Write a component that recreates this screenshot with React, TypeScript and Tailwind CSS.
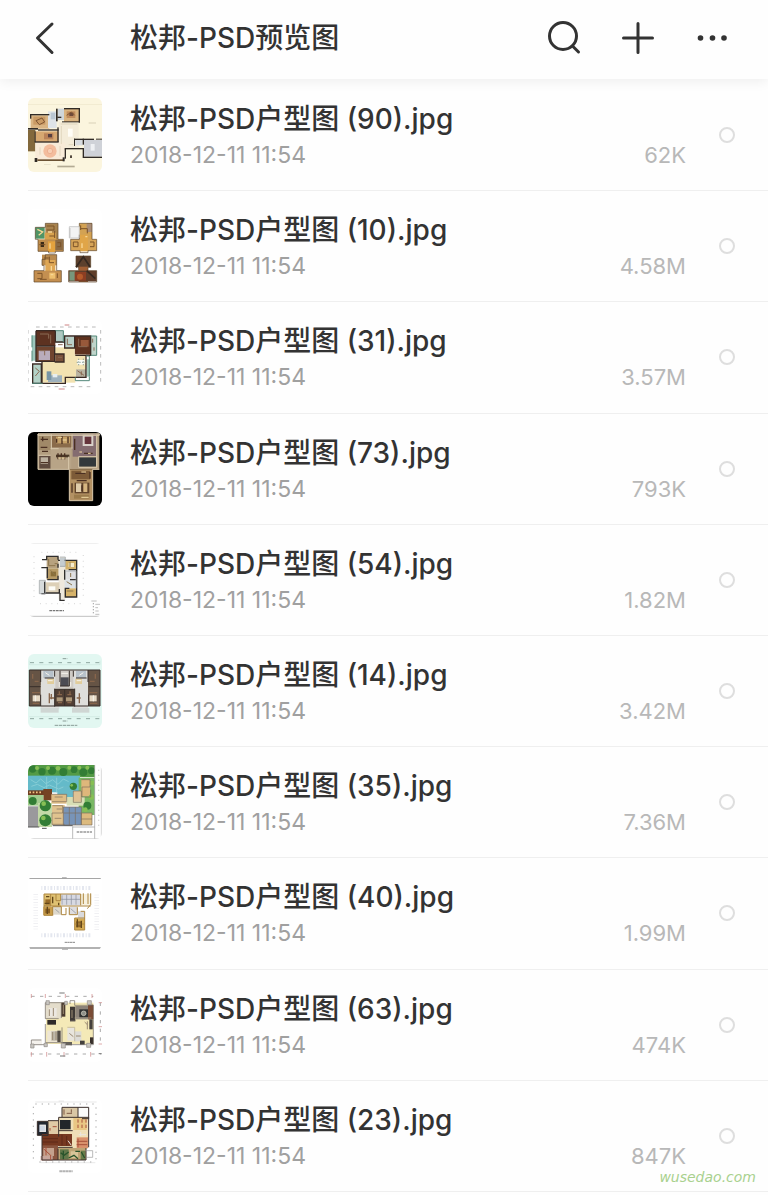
import type { ReactNode } from "react";

type Box = [x: number, y: number, w: number, h: number, fill: string];

function Boxes({ items }: { items: Box[] }) {
  return (
    <>
      {items.map(([x, y, w, h, fill], i) => (
        <rect key={i} x={x} y={y} width={w} height={h} fill={fill} />
      ))}
    </>
  );
}

function Plan({ top, children }: { top: number; children: ReactNode }) {
  return (
    <svg viewBox={`24 ${top} 222 222`} className="block size-full" aria-hidden="true">
      {children}
    </svg>
  );
}

function Plan90() {
  return (
    <Plan top={22}>
      <Boxes
        items={[
          [24, 22, 222, 222, "#fbf5de"],
          [24, 40, 222, 2, "#eee6cb"],
          [32, 74, 56, 40, "#d9b483"],
          [40, 78, 36, 24, "#c99a64"],
          [84, 62, 26, 50, "#dfe4e8"],
          [92, 66, 14, 20, "#b9c6d2"],
          [114, 54, 20, 34, "#cfd6db"],
          [132, 54, 46, 40, "#d9b27e"],
          [140, 62, 26, 20, "#c08b5c"],
          [148, 66, 12, 10, "#6f4a3a"],
          [24, 118, 22, 64, "#82683c"],
          [46, 122, 70, 32, "#d6a871"],
          [72, 128, 28, 18, "#b98258"],
          [84, 130, 12, 10, "#574040"],
          [116, 94, 60, 78, "#f4ecd9"],
          [144, 114, 14, 24, "#fffdf6"],
          [46, 156, 90, 52, "#f8ebd8"],
          [192, 148, 54, 50, "#cfd2d8"],
          [212, 160, 12, 20, "#eef0f3"],
          [166, 146, 22, 18, "#d7dbe0"],
          [30, 70, 58, 4, "#302b26"],
          [30, 70, 4, 14, "#302b26"],
          [108, 54, 5, 38, "#302b26"],
          [112, 78, 12, 4, "#302b26"],
          [132, 52, 46, 4, "#302b26"],
          [176, 52, 4, 44, "#302b26"],
          [126, 92, 54, 3, "#302b26"],
          [24, 112, 30, 5, "#302b26"],
          [54, 116, 62, 4, "#302b26"],
          [112, 110, 4, 44, "#302b26"],
          [44, 152, 72, 4, "#302b26"],
          [44, 122, 3, 32, "#302b26"],
          [44, 202, 8, 12, "#302b26"],
          [52, 206, 78, 5, "#6c5334"],
          [128, 200, 6, 12, "#302b26"],
          [134, 174, 4, 30, "#302b26"],
          [134, 172, 56, 4, "#302b26"],
          [188, 172, 4, 30, "#302b26"],
          [162, 144, 60, 4, "#302b26"],
          [228, 144, 18, 3, "#302b26"],
          [162, 144, 3, 22, "#302b26"],
          [188, 144, 4, 18, "#302b26"],
          [190, 198, 56, 4, "#302b26"],
          [150, 194, 6, 8, "#554b40"],
          [206, 96, 22, 2, "#c9c1a6"],
          [72, 220, 20, 1, "#c9c1a6"],
          [112, 225, 52, 5, "#b3ab94"],
        ]}
      />
      <circle cx="90" cy="181" r="20" fill="#f3bd9d" />
      <circle cx="90" cy="181" r="8" fill="#f8cfb4" stroke="#e7a583" strokeWidth="2" />
      <path d="M60 170v22M120 166v30M122 100h50M124 106v54M146 162h14" stroke="#d9cdb2" strokeWidth="2" />
      <path d="M48 90l18-8 8 12-16 8zM140 74l14-10 10 10" fill="none" stroke="#7d5432" strokeWidth="3" />
    </Plan>
  );
}

function Plan10() {
  return (
    <Plan top={-3}>
      <Boxes
        items={[
          [24, -3, 222, 222, "#ffffff"],
          [76, 40, 38, 52, "#a8834f"],
          [46, 52, 28, 34, "#4f9465"],
          [74, 68, 34, 24, "#d8a24e"],
          [54, 88, 76, 36, "#bf8e4d"],
          [84, 94, 22, 32, "#e4a23e"],
          [62, 96, 10, 15, "#3a2a17"],
          [106, 90, 22, 30, "#8a6a46"],
          [178, 40, 38, 50, "#d3a253"],
          [200, 40, 16, 26, "#a98d77"],
          [148, 50, 30, 34, "#f3f3f3"],
          [152, 88, 78, 34, "#d7a558"],
          [180, 74, 24, 50, "#e0a548"],
          [66, 134, 44, 32, "#b98a4e"],
          [76, 150, 30, 66, "#dfa755"],
          [42, 182, 82, 34, "#c48f50"],
          [88, 188, 18, 18, "#efc06f"],
          [168, 138, 44, 34, "#5c402d"],
          [176, 170, 28, 46, "#a05f35"],
          [146, 182, 84, 32, "#5f3d2a"],
          [148, 184, 18, 28, "#78977c"],
          [164, 186, 34, 26, "#8c3e23"],
        ]}
      />
      <path
        d="M76 52V40h38v48h16v36h-24v5H86v-5H54V88H46V52h30M178 50V40h38v48h14v34h-26v6h-24v-6h-28V88h26V74M66 148h10v-14h34v48h14v34H42v-34h30v-16h-6zM168 138h44v34h-8v10h26v34h-84v-34h30v-12h-8z"
        fill="none"
        stroke="#5c4429"
        strokeWidth="2"
      />
      <path
        d="M80 48h22v12H80M104 62v22M58 104h18M88 78h16M112 98h10v12h-10M182 56h20v14M160 96h14v14h-14zM210 96h12v14h-12M72 144h14M88 140v18h14M52 190h14v16H52M112 190v14M60 208h20M182 46v14"
        fill="none"
        stroke="#7c5429"
        strokeWidth="3"
      />
      <path
        d="M52 58l16 8-12 10M84 66h12M90 100v16M186 100v14M196 80h6M94 168v14M92 194h8"
        fill="none"
        stroke="#f8d797"
        strokeWidth="4"
      />
      <path d="M148 50h30v34h-30zM150 54v28" fill="none" stroke="#b7b7b7" strokeWidth="2" />
      <path d="M168 172l22-32 20 30M200 182l26 24" stroke="#352820" strokeWidth="5" fill="none" />
      <circle cx="180" cy="200" r="9" fill="#b55a2b" />
    </Plan>
  );
}

function Plan31() {
  return (
    <Plan top={16}>
      <Boxes
        items={[
          [24, 16, 222, 222, "#ffffff"],
          [36, 62, 14, 76, "#9cc6bc"],
          [48, 48, 58, 46, "#5d3221"],
          [48, 96, 56, 44, "#70442f"],
          [56, 108, 34, 28, "#b9acbc"],
          [106, 48, 26, 36, "#afc8c1"],
          [134, 66, 28, 34, "#b9d0c8"],
          [164, 64, 48, 56, "#5e321f"],
          [182, 76, 24, 20, "#98593a"],
          [212, 64, 18, 58, "#bfd5cb"],
          [104, 98, 60, 50, "#f2e2b1"],
          [66, 142, 100, 62, "#f2e2b1"],
          [132, 120, 66, 68, "#f2e2b1"],
          [106, 118, 26, 24, "#79513a"],
          [38, 150, 26, 56, "#b4d2c7"],
          [84, 182, 42, 20, "#9eb1bd"],
          [80, 170, 14, 26, "#7895a5"],
          [98, 178, 14, 10, "#e7eef0"],
          [168, 164, 30, 26, "#b8b3a2"],
          [172, 136, 22, 14, "#f9fbf6"],
          [200, 134, 8, 52, "#a2cbbc"],
        ]}
      />
      <path
        d="M48 48h58v34h28V64h78v58h-46M48 48v92h18v66h70v-18h62v-66M48 94h56v46H66M106 48v36M134 64v36h30V64M104 98v20h28v24h-28M38 148h26v58H38z"
        fill="none"
        stroke="#3a2b25"
        strokeWidth="4"
      />
      <path
        d="M36 62v36M36 108v32M212 64h18v58h-18M106 48h24v34M198 124h10v62M36 206h32M166 188v10h42v-12"
        fill="none"
        stroke="#55897b"
        strokeWidth="3"
      />
      <path
        d="M60 58h26v14M60 108h14v14M92 60v26M176 72v24h26M114 90h14M142 72v18h14M218 72v12M222 98v10M46 160l12 10-12 14M172 168l20 14M184 170v12M114 128h12"
        fill="none"
        stroke="#8a6a54"
        strokeWidth="3"
      />
      <path d="M176 132v22M190 132v22M170 143h26" stroke="#8fa39a" strokeWidth="3" strokeDasharray="4 4" />
      <path
        d="M48 37h190M32 216h190M24 46v162M242 46v162"
        stroke="#999"
        strokeWidth="2"
        strokeDasharray="11 13"
      />
      <path d="M134 31h14M116 223h18" stroke="#b54444" strokeWidth="2" />
    </Plan>
  );
}

function Plan73() {
  return (
    <Plan top={20}>
      <Boxes
        items={[
          [24, 20, 222, 222, "#000000"],
          [54, 24, 184, 108, "#b29d80"],
          [54, 26, 40, 48, "#a08968"],
          [96, 26, 62, 40, "#8a6b4a"],
          [158, 26, 70, 68, "#846c70"],
          [188, 28, 32, 34, "#d9d1ca"],
          [194, 34, 20, 22, "#65343b"],
          [58, 90, 34, 40, "#5e493e"],
          [62, 96, 22, 20, "#bcb0a0"],
          [92, 68, 62, 62, "#b8a487"],
          [176, 96, 54, 28, "#33383b"],
          [108, 34, 42, 20, "#c5a168"],
          [108, 88, 40, 8, "#493826"],
          [148, 132, 70, 94, "#b39163"],
          [154, 136, 56, 26, "#7d5b38"],
          [164, 172, 44, 32, "#61442b"],
          [168, 174, 16, 26, "#e0ccaa"],
          [190, 174, 12, 26, "#d6b580"],
          [162, 208, 46, 12, "#9b7b4c"],
        ]}
      />
      <path
        d="M54 26h184v4H54zM54 26v106h94v94h70v-94h20M94 28v44M156 28v42M92 70h24M176 94h54v32h-54zM56 90h36M146 94v38M230 30v96"
        fill="none"
        stroke="#d9c9ad"
        strokeWidth="3"
      />
      <path
        d="M62 42h22M68 34v14M62 66h20M66 78h18M110 40v12M126 32v24M144 34v20M164 40v34M62 112h22M114 84v18M124 84v18M134 84v18M192 84h26M166 144h30M156 174v28M210 140v20M170 166h30M186 180v18"
        stroke="#4b3022"
        strokeWidth="4"
      />
      <path d="M114 36h12M128 44h12M178 80h8M204 84h8M114 98h22M184 140h14M184 216h22" stroke="#f0d8a3" strokeWidth="3" />
    </Plan>
  );
}

function Plan54() {
  return (
    <Plan top={14}>
      <Boxes
        items={[
          [24, 14, 222, 222, "#fefefe"],
          [28, 14, 210, 2, "#e7e7e7"],
          [80, 56, 36, 34, "#b7a27f"],
          [80, 90, 36, 34, "#b79b66"],
          [116, 56, 20, 128, "#eee8dc"],
          [120, 58, 16, 28, "#c5ccd0"],
          [136, 68, 34, 26, "#d2b16b"],
          [134, 96, 36, 28, "#dfdfe1"],
          [134, 124, 36, 26, "#dce1e4"],
          [134, 150, 34, 26, "#d6b36a"],
          [74, 132, 44, 32, "#ddd0b7"],
          [58, 126, 18, 40, "#d7dbdc"],
          [92, 100, 16, 14, "#8a6f39"],
          [86, 144, 20, 12, "#fdfcf7"],
          [146, 74, 16, 12, "#f6edcf"],
        ]}
      />
      <path
        d="M80 66V54h34v10M66 64h14M64 88h18v32M114 88V76M82 124h32v-12M114 66h6M134 66h36v28h-24M170 96v80h-34v-26h12M120 164v22h14M74 130v34h44v-12M134 94v30M64 166h12M150 124h20"
        fill="none"
        stroke="#302e2d"
        strokeWidth="4"
      />
      <path d="M58 126h18v40H58zM120 56h16v28h-16M136 98h32v52" fill="none" stroke="#9ba0a3" strokeWidth="2" />
      <path d="M86 62v20h20M92 96l14 16M104 76h8M140 158h20M150 72v14M140 130l16 10M152 104v12" fill="none" stroke="#8b754b" strokeWidth="3" />
      <path d="M64 42h114M60 196h124M42 54v132M190 50v130" stroke="#dedede" strokeWidth="4" strokeDasharray="3 14" />
      <path d="M88 217h44" stroke="#777" strokeWidth="4" strokeDasharray="8 2" />
      <path d="M28 234h210M214 188h16M226 198h14M226 208h8M226 218h10M226 228h12" stroke="#a0a0a0" strokeWidth="2" />
      <path d="M220 194v34" stroke="#a0a0a0" strokeWidth="3" strokeDasharray="4 5" />
    </Plan>
  );
}

function Plan14() {
  return (
    <Plan top={12}>
      <Boxes
        items={[
          [24, 12, 222, 222, "#e2f7f1"],
          [28, 60, 212, 108, "#645447"],
          [62, 60, 56, 118, "#dededb"],
          [158, 60, 46, 118, "#dededb"],
          [106, 60, 54, 58, "#cfcbc5"],
          [34, 62, 28, 44, "#665445"],
          [206, 62, 28, 44, "#665445"],
          [70, 62, 30, 22, "#b8c2ca"],
          [168, 62, 30, 22, "#b8c2ca"],
          [82, 86, 20, 16, "#e1cd9c"],
          [166, 86, 20, 16, "#e1cd9c"],
          [122, 82, 24, 26, "#4c4c53"],
          [104, 118, 60, 50, "#503f35"],
          [38, 136, 22, 18, "#e6dac6"],
          [208, 136, 22, 18, "#e6dac6"],
          [110, 142, 18, 12, "#ae9879"],
          [138, 142, 18, 12, "#ae9879"],
          [62, 174, 54, 14, "#cfd6d3"],
          [156, 174, 52, 14, "#cfd6d3"],
        ]}
      />
      <path
        d="M28 60h212v108H28zM62 60v36M204 60v36M104 62v18M160 62v18M28 110h34M206 110h34M104 118h60M134 118v50M62 134v34M206 134v34M104 116v54M164 116v54M120 62v46h28V62M74 84h28M168 84h32"
        fill="none"
        stroke="#382f2a"
        strokeWidth="3"
      />
      <path
        d="M38 72v14M44 94h12M36 128h24M38 160h20M226 72v14M210 94h14M208 128h24M210 160h22M88 130v30M90 144h12M94 132v16M178 130v30M170 144h12M112 134h14M142 134h12M114 158h12M142 158h12M118 124v12M150 124v12"
        stroke="#87654b"
        strokeWidth="4"
      />
      <path d="M76 68l12 8M190 68l-12 8M84 92h14M170 92h14M124 70h20M118 96v14M152 96v14M46 136v18M220 136v18" stroke="#f7f4ed" strokeWidth="3" />
      <path d="M30 38h210M30 206h210" stroke="#8fa8a1" strokeWidth="3" strokeDasharray="12 16" />
      <path d="M28 32v12M240 32v12M28 44h212M28 200h212" stroke="#b7d3cb" strokeWidth="1" />
      <path d="M128 26h14M128 213h14M104 226h68" stroke="#8a9d97" strokeWidth="3" strokeDasharray="10 2" />
    </Plan>
  );
}

function Plan35() {
  return (
    <Plan top={16}>
      <Boxes
        items={[
          [24, 16, 222, 222, "#ffffff"],
          [24, 16, 200, 36, "#539a45"],
          [24, 48, 156, 50, "#64bac9"],
          [112, 78, 48, 42, "#68bac8"],
          [176, 54, 48, 112, "#79b864"],
          [24, 92, 70, 14, "#6d3d21"],
          [70, 88, 26, 34, "#754324"],
          [24, 106, 46, 32, "#a3cc8f"],
          [94, 104, 46, 28, "#dfbd86"],
          [140, 112, 54, 26, "#d8deb5"],
          [24, 140, 32, 62, "#9a999c"],
          [54, 130, 42, 72, "#c3d9a7"],
          [96, 136, 38, 60, "#e0c38f"],
          [130, 142, 54, 54, "#7894b8"],
          [184, 160, 32, 36, "#dcba7e"],
          [184, 60, 26, 50, "#deb77b"],
          [160, 94, 24, 32, "#dfc294"],
        ]}
      />
      <g fill="#327d35">
        <circle cx="38" cy="28" r="11" />
        <circle cx="66" cy="36" r="11" />
        <circle cx="96" cy="33" r="12" />
        <circle cx="130" cy="37" r="12" />
        <circle cx="162" cy="30" r="10" />
        <circle cx="190" cy="38" r="12" />
        <circle cx="214" cy="33" r="10" />
        <circle cx="160" cy="80" r="11" />
        <circle cx="76" cy="138" r="17" />
        <circle cx="76" cy="182" r="18" />
        <circle cx="38" cy="124" r="12" />
        <circle cx="202" cy="138" r="12" />
      </g>
      <g fill="#87bf55">
        <circle cx="51" cy="25" r="6" />
        <circle cx="84" cy="25" r="6" />
        <circle cx="114" cy="26" r="7" />
        <circle cx="148" cy="24" r="6" />
        <circle cx="178" cy="24" r="6" />
        <circle cx="202" cy="24" r="6" />
        <circle cx="71" cy="132" r="7" />
        <circle cx="70" cy="175" r="7" />
        <circle cx="216" cy="70" r="7" />
        <circle cx="214" cy="112" r="8" />
        <circle cx="196" cy="150" r="7" />
        <circle cx="155" cy="77" r="4" />
      </g>
      <path d="M32 60l16 10 14-12 16 14 20-12 16 14 16-16 16 8M34 80l18-6 20 10 16-8 28 12 14-6M80 52v36M110 54v44" stroke="#86cdd6" strokeWidth="3" fill="none" />
      <path
        d="M184 60h26v22h-24v30h26v-22M160 94h24v34h-24zM96 104h44v22H96M98 138h30v22H96v34h38M184 160h32v36h-32zM184 178h32M130 142h54v54h-54zM148 142v54M166 142v54M130 160h54M104 112h24M110 148h16M104 176h20"
        fill="none"
        stroke="#7b6d5b"
        strokeWidth="2"
      />
      <path d="M28 98h36" stroke="#f4c583" strokeWidth="5" strokeDasharray="5 5" />
      <path d="M24 202h34M66 206h14M98 198h60" fill="none" stroke="#555" strokeWidth="3" />
      <path d="M224 16v222M158 200v38M158 202h66" fill="none" stroke="#999" strokeWidth="2" />
      <path d="M236 30v178" stroke="#ccc" strokeWidth="4" strokeDasharray="3 12" />
      <path d="M244 18v220M24 237h222" stroke="#c4c4c4" strokeWidth="2" />
      <path d="M170 217h46" stroke="#999" strokeWidth="4" strokeDasharray="8 2" />
    </Plan>
  );
}

function Plan40() {
  return (
    <Plan top={14}>
      <Boxes
        items={[
          [24, 14, 222, 222, "#ffffff"],
          [28, 20, 216, 3, "#a6a6a6"],
          [28, 228, 216, 4, "#8d8d8d"],
          [72, 68, 50, 36, "#dfc172"],
          [70, 106, 30, 26, "#c99d4b"],
          [100, 106, 24, 24, "#ddd8cc"],
          [124, 68, 58, 34, "#d7d9e2"],
          [146, 106, 28, 24, "#dedde0"],
          [180, 68, 34, 34, "#f7f1de"],
          [164, 140, 30, 36, "#d5ab53"],
          [174, 120, 18, 22, "#d9dadd"],
          [76, 84, 16, 16, "#986b29"],
          [76, 112, 14, 14, "#8a5f22"],
          [168, 150, 18, 18, "#8f6728"],
        ]}
      />
      <path d="M72 68h110v34M72 68v64h26v-26h26v24h14v-20M92 68v36H72M108 68v20h14V68M72 104h140M148 108v22h24v-22M190 66v32M204 66v32M212 66v34l-10 12M182 120h12v20M164 140h30v36h-30zM164 158h30" fill="none" stroke="#ae8741" strokeWidth="3" />
      <path d="M126 72v28M140 70v30M154 70v30M168 70v30M124 84h58M106 114l12 10M152 112l16 14" fill="none" stroke="#888c98" strokeWidth="2" />
      <path d="M78 76h10M98 76v20M116 94v8M74 96h14M82 106v22M172 144v24M184 148v22" stroke="#63471b" strokeWidth="4" />
      <path d="M64 50h152M64 192h148" stroke="#e4e7ef" strokeWidth="12" strokeDasharray="3 5 6 5" />
      <path d="M47 68v112M230 70v110" stroke="#ececf0" strokeWidth="14" strokeDasharray="2 6" />
      <path d="M134 213h32" stroke="#888" strokeWidth="3" strokeDasharray="7 1" />
      <path d="M126 19h14M126 234h18" stroke="#888" strokeWidth="2" />
    </Plan>
  );
}

function Plan63() {
  return (
    <Plan top={12}>
      <Boxes
        items={[
          [24, 12, 222, 222, "#ffffff"],
          [78, 56, 142, 124, "#f4e9b7"],
          [76, 56, 48, 48, "#e4ddcb"],
          [86, 72, 24, 26, "#ece8e2"],
          [124, 56, 12, 42, "#4b3b30"],
          [150, 68, 16, 44, "#3f3a36"],
          [166, 66, 46, 40, "#8c8379"],
          [178, 76, 26, 24, "#2f3030"],
          [204, 62, 16, 44, "#7a4c35"],
          [208, 106, 10, 30, "#44403d"],
          [82, 108, 26, 14, "#2f2b28"],
          [82, 140, 42, 36, "#eee6d5"],
          [94, 142, 20, 28, "#bfb8aa"],
          [112, 140, 10, 34, "#544d45"],
          [142, 132, 22, 38, "#e8e5dd"],
          [164, 142, 20, 30, "#dddcd7"],
          [128, 174, 28, 10, "#65615b"],
          [180, 170, 14, 12, "#43403d"],
          [210, 160, 10, 20, "#38302b"],
          [34, 166, 32, 18, "#f4f1ec"],
        ]}
      />
      <path
        d="M76 56h62M76 56v48h40M150 60V50h14v14h56v42M76 120v56h54M124 58v44M126 130v48M150 110h16M220 106v76h-70M64 168H34v14h42"
        fill="none"
        stroke="#6b645d"
        strokeWidth="2"
      />
      <path d="M142 130h22v42M164 102h50" fill="none" stroke="#b3aa96" strokeWidth="2" />
      <path d="M78 50h10v12H78zM134 52h8v10h-8zM202 50h12v12h-12zM32 180h10v12H32zM124 178h12v14h-12zM72 178h10v10H72zM200 178h12v12h-12z" fill="#c8c5c0" stroke="#8f8b87" strokeWidth="2" />
      <circle cx="191" cy="88" r="7" fill="#90918a" stroke="#dad7c7" strokeWidth="2" />
      <path d="M88 76v20M100 72v24M98 144v24M108 142v26M148 148l12 10M168 156h14M194 114l8 8M202 112v24M130 62v28M156 78v24" stroke="#9a8a72" strokeWidth="3" />
      <path d="M34 37h186M32 210h212M241 56v124" stroke="#aaa" strokeWidth="3" strokeDasharray="10 16" />
      <path d="M34 30v12M76 30v12M136 30v12M216 30v12M34 204v14M80 204v14M132 204v14M212 204v14M236 56h10M236 128h10M236 180h10" stroke="#cb8080" strokeWidth="2" />
      <path d="M118 27h16M120 216h16M236 209h9" stroke="#777" strokeWidth="3" />
    </Plan>
  );
}

function Plan23() {
  return (
    <Plan top={345}>
      <Boxes
        items={[
          [24, 345, 222, 222, "#ffffff"],
          [126, 370, 48, 32, "#d9c7a5"],
          [174, 370, 32, 34, "#fbfbf9"],
          [116, 400, 88, 94, "#efdfb7"],
          [120, 408, 32, 28, "#22262a"],
          [52, 412, 32, 42, "#22272f"],
          [58, 422, 20, 22, "#ced6e3"],
          [84, 410, 32, 40, "#e0caa6"],
          [66, 450, 90, 36, "#763820"],
          [66, 484, 48, 44, "#8a5640"],
          [70, 492, 32, 24, "#c4a18d"],
          [114, 492, 84, 36, "#bda475"],
          [160, 400, 40, 38, "#e9c784"],
          [170, 460, 34, 32, "#d8916c"],
          [62, 516, 36, 14, "#c7a69b"],
          [120, 496, 26, 30, "#62774a"],
          [182, 500, 14, 28, "#697d4b"],
          [152, 502, 22, 20, "#d7c59a"],
        ]}
      />
      <path
        d="M126 400v-30h48v30M174 370h32v34h-20M116 400h90v90M52 412h32v42H52zM84 410h32M116 400v58M66 456v72h48v-34M114 528h84v-36M114 490h44M116 440h42M84 442v12H66"
        fill="none"
        stroke="#3c302c"
        strokeWidth="3"
      />
      <path
        d="M174 406v10M186 406v10M198 406v10M174 422v10M186 422v10M198 422v10M174 464v26M170 472h32M170 482h32M98 428h12M90 432v8M70 494l20 18M78 488v26M92 528v-16"
        stroke="#a8513a"
        strokeWidth="3"
      />
      <path d="M122 506l10 8 14-10M130 500v26M146 522l16-8 12 10M184 504l10 18M166 502h14" fill="none" stroke="#29542c" strokeWidth="4" />
      <path d="M68 464h46M68 474h46M126 452v32M140 456v28M132 376v16M140 388h16M154 376v10" stroke="#522216" strokeWidth="2" />
      <path d="M60 424h16v18H60M182 444v12M176 452h22M144 470l10 14" fill="none" stroke="#e9e5e0" strokeWidth="3" />
      <path d="M196 500h22v20h-18" fill="none" stroke="#999" strokeWidth="2" />
      <path d="M46 360h184M58 534h168M40 368v158M228 370v158" stroke="#aaa" strokeWidth="3" strokeDasharray="4 15" />
      <path d="M46 354h184M116 351h16M62 536h164" stroke="#bbb" strokeWidth="1" />
      <path d="M118 562h40" stroke="#b3b3b3" strokeWidth="6" strokeDasharray="8 1" />
    </Plan>
  );
}

const files = [
  { id: 90, size: "62K", Thumb: Plan90 },
  { id: 10, size: "4.58M", Thumb: Plan10 },
  { id: 31, size: "3.57M", Thumb: Plan31 },
  { id: 73, size: "793K", Thumb: Plan73 },
  { id: 54, size: "1.82M", Thumb: Plan54 },
  { id: 14, size: "3.42M", Thumb: Plan14 },
  { id: 35, size: "7.36M", Thumb: Plan35 },
  { id: 40, size: "1.99M", Thumb: Plan40 },
  { id: 63, size: "474K", Thumb: Plan63 },
  { id: 23, size: "847K", Thumb: Plan23 },
];

export default function App() {
  return (
    <div className="relative flex min-h-screen flex-col bg-[#fefefe] font-['Inter','Noto_Sans_CJK_SC',sans-serif] text-[#333]">
      <header className="flex h-[79px] shrink-0 items-center bg-[#fefefe] pr-[38px] pb-[3px] pl-7 shadow-[0_2px_12px_rgba(0,0,0,0.07)]">
        <button type="button" aria-label="返回" className="flex w-[102px] shrink-0 items-center">
          <svg viewBox="0 0 36 36" className="size-9" fill="none" stroke="currentColor" strokeWidth="3" strokeLinecap="round" strokeLinejoin="round">
            <path d="M24 4L9.500 18L24 32.500" />
          </svg>
        </button>
        <h1 className="flex-1 truncate text-[28px] leading-9 font-medium">松邦-PSD预览图</h1>
        <div className="flex items-center gap-[38px]">
          <button type="button" aria-label="搜索">
            <svg viewBox="0 0 36 36" className="size-9" fill="none" stroke="currentColor" strokeWidth="3" strokeLinecap="round">
              <circle cx="17" cy="16" r="13.500" />
              <path d="M26.500 26L32.500 32" />
            </svg>
          </button>
          <button type="button" aria-label="新建">
            <svg viewBox="0 0 36 36" className="size-9" fill="none" stroke="currentColor" strokeWidth="3" strokeLinecap="round">
              <path d="M18 3.500V32.500M3.500 18H32.500" />
            </svg>
          </button>
          <button type="button" aria-label="更多">
            <svg viewBox="0 0 36 36" className="size-9" fill="currentColor">
              <circle cx="6.500" cy="18" r="2.800" />
              <circle cx="18.500" cy="18" r="2.800" />
              <circle cx="30" cy="18" r="2.800" />
            </svg>
          </button>
        </div>
      </header>

      <ul className="grid flex-1 auto-rows-fr pt-px pb-[3px] pl-7">
        {files.map(({ id, size, Thumb }) => (
          <li key={id} className="flex items-center border-b border-[#efefef] py-4 pr-[33px]">
            <div className="size-[74px] shrink-0 overflow-hidden rounded-md">
              <Thumb />
            </div>
            <div className="ml-7 min-w-0 flex-1 pt-1">
              <label htmlFor={`file-${id}`} className="block truncate text-[28px] leading-9 font-medium">
                松邦-PSD户型图 ({id}).jpg
              </label>
              <div className="flex justify-between text-[22px] leading-9">
                <time dateTime="2018-12-11T11:54" className="text-[23px] text-[#a0a0a0]">
                  2018-12-11 11:54
                </time>
                <span className="text-[#b8b8b8]">{size}</span>
              </div>
            </div>
            <input
              id={`file-${id}`}
              type="checkbox"
              className="ml-[33px] size-4 shrink-0 appearance-none rounded-full border-2 border-[#dedede] checked:bg-[#dedede]"
            />
          </li>
        ))}
      </ul>

      <a
        href="#top"
        className="absolute right-3 bottom-2 font-['DejaVu_Sans',sans-serif] text-[14px] leading-5 text-[#a9d18e] italic"
      >
        wusedao.com
      </a>
    </div>
  );
}
